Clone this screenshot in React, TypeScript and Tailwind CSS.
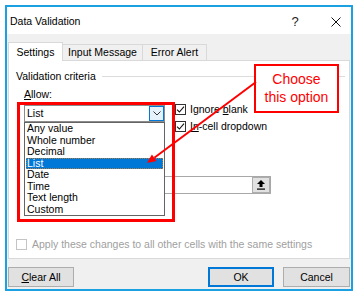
import React from "react";

function Check({ checked, disabled }: { checked?: boolean; disabled?: boolean }) {
  return (
    <span
      className={
        disabled
          ? "w-[11px] h-[11px] border border-[#c4c4c4] bg-white flex items-center justify-center shrink-0"
          : "w-[11px] h-[11px] border border-[#333333] bg-white flex items-center justify-center shrink-0"
      }
    >
      {checked && (
        <svg width="9" height="9" viewBox="0 0 9 9">
          <path d="M1 4.6 L3.4 7 L8 1.6" fill="none" stroke="#111" strokeWidth="1.1" />
        </svg>
      )}
    </span>
  );
}

const items = ["Any value", "Whole number", "Decimal", "List", "Date", "Time", "Text length", "Custom"];

export default function App() {
  return (
    <div className="relative w-[359px] h-[298px] bg-white pt-[5px] pl-[5px] font-['Liberation_Sans',Arial,sans-serif] text-[10.5px] leading-[13px] text-black overflow-hidden">
      <div className="w-[348px] h-[286px] border-2 border-[#1ba1e2] flex flex-col">
        {/* Title bar */}
        <div className="h-[27px] shrink-0 bg-white flex items-center pl-[3px] pt-[2px]">
          <span>Data Validation</span>
          <span className="ml-auto w-[10px] text-center text-[13px] text-[#222] mr-[31px]">?</span>
          <svg width="10" height="10" viewBox="0 0 10 10" className="mr-[10px]">
            <path d="M0.5 0.5 L9.5 9.5 M9.5 0.5 L0.5 9.5" stroke="#111" strokeWidth="1" />
          </svg>
        </div>

        {/* Body */}
        <div className="flex-1 bg-[#f0f0f0] flex flex-col px-px pt-[8px]">
          {/* Tabs */}
          <div className="h-[18px] flex items-end shrink-0">
            <div className="relative z-10 -mb-px h-[19px] w-[55px] bg-white border border-b-0 border-[#d9d9d9] flex items-center justify-center">
              Settings
            </div>
            <div className="h-[16px] w-[80px] bg-[#f0f0f0] border-t border-r border-[#d9d9d9] flex items-center justify-center">
              Input Message
            </div>
            <div className="h-[16px] w-[64px] bg-[#f0f0f0] border-t border-r border-[#d9d9d9] flex items-center justify-center">
              Error Alert
            </div>
          </div>

          {/* Panel */}
          <div className="h-[199px] shrink-0 border border-[#d9d9d9] bg-white flex flex-col">
            <div className="flex items-center mt-[9px] pl-[7px] h-[13px]">
              <span>Validation criteria</span>
              <div className="flex-1 h-px bg-[#dcdcdc] ml-[6px] mr-[4px]" />
            </div>
            <div className="pl-[15px] mt-[4.5px] h-[13px]">
              <span className="underline">A</span>llow:
            </div>
            <div className="flex pl-[15px] mt-[4.5px]">
              <div className="w-[141px] h-[17px] border border-[#8c8c8c] bg-white flex">
                <span className="flex-1 pl-[2px] leading-[15px]">List</span>
                <span className="w-[15px] border border-[#0078d7] bg-[#e5f1fb] flex items-center justify-center">
                  <svg width="8" height="5" viewBox="0 0 8 5">
                    <path d="M0.5 0.5 L4 4 L7.5 0.5" fill="none" stroke="#333" strokeWidth="1" />
                  </svg>
                </span>
              </div>
              <div className="ml-[10px] -mt-px flex flex-col">
                <div className="flex items-center gap-[4px] h-[11px]">
                  <Check checked />
                  <span>
                    Ignore <span className="underline">b</span>lank
                  </span>
                </div>
                <div className="flex items-center gap-[4px] h-[11px] mt-[6px]">
                  <Check checked />
                  <span>
                    <span className="underline">In</span>-cell dropdown
                  </span>
                </div>
              </div>
            </div>
            {/* Area hidden under the open list (Data / Source labels) */}
            <div className="h-[44px] shrink-0" />
            <div className="pl-[15px]">
              <div className="w-[247px] h-[18px] border border-[#a8a8a8] bg-white flex justify-end items-center">
                <span className="w-[18px] h-[16px] bg-[#e1e1e1] border border-[#adadad] flex items-center justify-center">
                  <svg width="8" height="10" viewBox="0 0 8 10">
                    <path d="M4 0 L0 4 L2.5 4 L2.5 7 L5.5 7 L5.5 4 L8 4 Z" fill="#000" />
                    <rect x="0" y="8.5" width="8" height="1.2" fill="#000" />
                  </svg>
                </span>
              </div>
            </div>
            <div className="mt-auto mb-[8px] pl-[7px] flex items-center gap-[5px] h-[11px] text-[#a0a0a0]">
              <Check disabled />
              <span>Apply these changes to all other cells with the same settings</span>
            </div>
          </div>

          {/* Buttons */}
          <div className="flex h-[20px] mt-[8px] shrink-0">
            <button className="w-[66px] h-[20px] bg-[#e1e1e1] border border-[#adadad] flex items-center justify-center">
              <span>
                <span className="underline">C</span>lear All
              </span>
            </button>
            <button className="ml-auto w-[66px] h-[20px] bg-[#e1e1e1] border-2 border-[#0078d7] flex items-center justify-center">
              OK
            </button>
            <button className="ml-[9px] w-[67px] h-[20px] bg-[#e1e1e1] border border-[#adadad] flex items-center justify-center">
              Cancel
            </button>
          </div>
        </div>
      </div>

      {/* Dropdown list overlay */}
      <div className="absolute left-[24px] top-[122px] w-[141px] border border-[#646464] bg-white">
        {items.map((it) =>
          it === "List" ? (
            <div
              key={it}
              className="mx-px h-[11.5px] leading-[11.5px] pl-px bg-[#0078d7] text-white outline-1 outline-dotted outline-[#b07a40] -outline-offset-1"
            >
              {it}
            </div>
          ) : (
            <div key={it} className="mx-px h-[11.5px] leading-[11.5px] pl-px">
              {it}
            </div>
          )
        )}
      </div>

      {/* Red highlight rectangle */}
      <div className="absolute left-[17px] top-[102px] w-[158px] h-[120px] border-[3px] border-[#ff0000] pointer-events-none" />

      {/* Annotation box */}
      <div className="absolute left-[254px] top-[64px] w-[85px] h-[49px] border-2 border-[#ff0000] bg-white flex flex-col items-center justify-center text-[14px] leading-[17.5px] text-[#ff0000]">
        <span>Choose</span>
        <span>this option</span>
      </div>

      {/* Arrow */}
      <svg className="absolute left-0 top-0 pointer-events-none" width="359" height="298" viewBox="0 0 359 298">
        <line x1="256" y1="82" x2="154.3" y2="157.7" stroke="#ff0000" strokeWidth="2" />
        <polygon points="147,163 156.6,160.9 151.9,154.5" fill="#ff0000" />
      </svg>
    </div>
  );
}
